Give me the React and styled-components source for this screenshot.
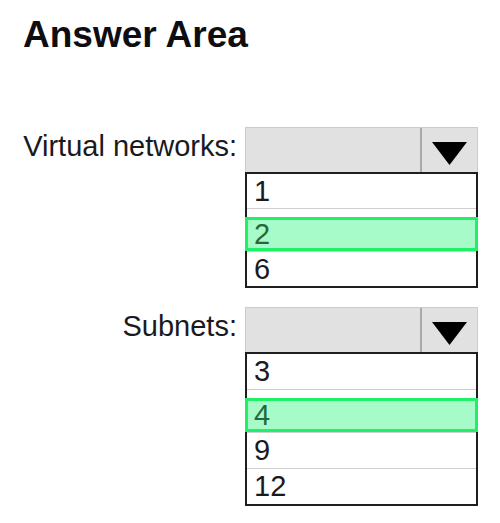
import React from "react";
import styled, { createGlobalStyle } from "styled-components";

const Global = createGlobalStyle`
  html, body {
    margin: 0;
    padding: 0;
    background: #ffffff;
  }
  body {
    font-family: "Liberation Sans", Arial, sans-serif;
    color: #1a1a1e;
  }
`;

const Page = styled.div`
  width: 500px;
  height: 523px;
  padding-top: 17px;
  box-sizing: border-box;
`;

const Title = styled.h1`
  margin: 0 0 74px 23px;
  font-size: 37px;
  line-height: 36px;
  font-weight: 700;
  color: #0d0d12;
`;

const Questions = styled.div`
  display: flex;
  flex-direction: column;
  gap: 19px;
`;

const Field = styled.div`
  display: flex;
  align-items: flex-start;
  gap: 8px;
`;

const Label = styled.div`
  width: 237px;
  text-align: right;
  font-size: 29px;
  line-height: 38px;
  white-space: nowrap;
`;

const Dropdown = styled.div`
  width: 233px;
  display: flex;
  flex-direction: column;
`;

const Header = styled.div`
  height: 45px;
  box-sizing: border-box;
  display: flex;
  background: #e1e1e1;
  border: 1px solid #cbcbcb;
  border-bottom: none;
`;

const ValueBox = styled.div`
  flex: 1;
  border-right: 2px solid #a9a9a9;
`;

const ArrowButton = styled.div`
  width: 55px;
  display: flex;
  justify-content: center;
  padding-top: 14px;
  box-sizing: border-box;
`;

const List = styled.div`
  border: 2px solid #1e1e1e;
  display: flex;
  flex-direction: column;
`;

const Option = styled.div`
  height: ${(p) => (p.$selected ? 42 : p.$rowH)}px;
  display: flex;
  flex-direction: column;
  font-size: 29px;
  line-height: ${(p) => p.$rowH}px;
  padding-left: ${(p) => (p.$selected ? 0 : 7)}px;
  border-bottom: ${(p) => (p.$last ? "none" : "1px solid #cfcfcf")};
`;

const Highlight = styled.div`
  flex: 1;
  margin: 8px -2px 2px -2px;
  border: 3px solid #1ff067;
  background: #a7fbc8;
  color: #226a3c;
  line-height: 28px;
  padding-left: 6px;
`;

const Arrow = () => (
  <svg width="35" height="23" viewBox="0 0 35 23" aria-hidden="true">
    <polygon points="0,0 35,0 17.5,23" fill="#000" />
  </svg>
);

const fields = [
  { label: "Virtual networks:", options: ["1", "2", "6"], selected: "2", rowH: 34 },
  { label: "Subnets:", options: ["3", "4", "9", "12"], selected: "4", rowH: 35 },
];

export default function App() {
  return (
    <>
      <Global />
      <Page>
        <Title>Answer Area</Title>
        <Questions>
          {fields.map((f) => (
            <Field key={f.label}>
              <Label>{f.label}</Label>
              <Dropdown>
                <Header>
                  <ValueBox />
                  <ArrowButton>
                    <Arrow />
                  </ArrowButton>
                </Header>
                <List>
                  {f.options.map((o, i) => {
                    const sel = o === f.selected;
                    return (
                      <Option
                        key={o}
                        $rowH={f.rowH}
                        $selected={sel}
                        $last={i === f.options.length - 1}
                      >
                        {sel ? <Highlight>{o}</Highlight> : o}
                      </Option>
                    );
                  })}
                </List>
              </Dropdown>
            </Field>
          ))}
        </Questions>
      </Page>
    </>
  );
}
